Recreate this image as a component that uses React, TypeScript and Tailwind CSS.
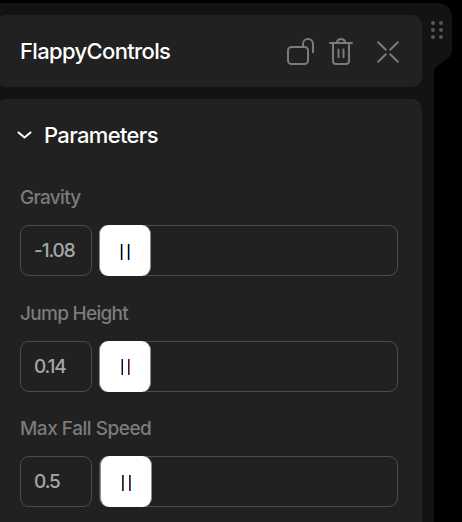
import React from "react";

const params = [
  {
    label: "Gravity", value: "-1.08", labelClass: "tracking-[-0.7px]", valueClass: "tracking-[-1.1px] pl-[13px]",
    row: "mb-[23px]", thumb: "ml-0", bars: "gap-[4px] pl-[20px] pt-[19px]",
    left: "w-[3px] border-x border-l-[#ffc68a] border-r-[#4aa8ff] bg-black",
    right: "w-[3px] border-x border-l-[#ffc68a] border-r-[#4aa8ff] bg-black",
  },
  {
    label: "Jump Height", value: "0.14", labelClass: "tracking-[-0.7px]", valueClass: "tracking-[-1.2px] pl-[13px]",
    row: "mb-[22px]", thumb: "ml-0", bars: "gap-[5px] pl-[21px] pt-[18px]",
    left: "w-[2px] border-x border-l-[#a88a58] border-r-[#000080]",
    right: "w-[2px] border-x border-l-[#800000] border-r-[#5a88a8]",
  },
  {
    label: "Max Fall Speed", value: "0.5", labelClass: "tracking-[-0.48px]", valueClass: "tracking-[-1.1px] pl-[13px]",
    row: "mb-[22px]", thumb: "ml-px", bars: "gap-[5px] pl-[21px] pt-[19px]",
    left: "w-[2px] border-x border-l-[#800000] border-r-[#1468a8]",
    right: "w-[2px] border-x border-l-[#701010] border-r-[#1468a8]",
  },
];

function UnlockIcon() {
  return (
    <svg width="28" height="28" viewBox="0 0 28 28" fill="none" stroke="#7b7b7b" strokeWidth="2" strokeLinecap="round">
      <rect x="2" y="10" width="20" height="17" rx="3.5" />
      <path d="M17 9.5V7a5 5 0 0 1 10 0V15.2" />
    </svg>
  );
}

function TrashIcon() {
  return (
    <svg width="24" height="28" viewBox="0 0 24 28" fill="none" stroke="#7b7b7b" strokeWidth="2" strokeLinecap="round">
      <path d="M1 6h22M7.8 5.5a4.3 4.3 0 0 1 8.4 0M4 6.5v17.5a3 3 0 0 0 3 3h10a3 3 0 0 0 3-3V6.5M9.5 12.5v7.8M14.5 12.5v7.8" />
    </svg>
  );
}

function CollapseIcon() {
  return (
    <svg width="22" height="22" viewBox="0 0 22 22" fill="none" stroke="#7b7b7b" strokeWidth="2" strokeLinecap="round">
      <path d="M1.2 1.2l7.6 7.6M20.8 1.2l-7.6 7.6M1.2 20.8l7.6-7.6M20.8 20.8l-7.6-7.6" />
    </svg>
  );
}

export default function App() {
  return (
    <div className="flex h-[522px] w-[462px] items-start overflow-hidden bg-black pt-[3px] font-['Inter',sans-serif]">
      <main className="flex h-[519px] w-[434px] shrink-0 flex-col gap-3 bg-[#131313] pt-3">
        <header className="-ml-1 flex h-[72px] w-[426px] shrink-0 items-center rounded-[10px] bg-[#212121] pl-6">
          <h1 className="w-[266px] text-[22px] leading-7 font-medium tracking-[-0.65px] whitespace-nowrap text-white">FlappyControls</h1>
          <div className="flex items-center">
            <UnlockIcon />
            <div className="ml-[15px]"><TrashIcon /></div>
            <div className="ml-[23.5px] pt-px"><CollapseIcon /></div>
          </div>
        </header>
        <section className="-ml-1 h-[440px] w-[426px] rounded-t-[10px] bg-[#212121] pt-[22px] pl-6">
          <div className="mb-[34px] flex h-7 items-center">
            <svg className="mr-3 -ml-[3px]" width="15" height="9" viewBox="0 0 15 9" fill="none" stroke="white" strokeWidth="2" strokeLinecap="round" strokeLinejoin="round">
              <path d="M1.5 1.5l6 5 6-5" />
            </svg>
            <h2 className="text-[22px] leading-7 font-medium tracking-[-0.65px] text-white">Parameters</h2>
          </div>
          {params.map((p) => (
            <div key={p.label} className={p.row}>
              <div className={`mb-[12px] h-[30px] text-[19px] leading-[30px] font-medium whitespace-nowrap text-[#7b7b7b] ${p.labelClass}`}>{p.label}</div>
              <div className="flex gap-[7px]">
                <div className={`flex h-[51px] w-[72px] items-center rounded-[9px] border border-[#4d4d4d] pt-[2px] text-[19px] font-medium text-[#a6a6a6] ${p.valueClass}`}>{p.value}</div>
                <div className="h-[51px] w-[299px] rounded-[9px] border border-[#4d4d4d]">
                  <div className={`-mt-px -translate-x-px ${p.thumb}`}>
                    <div className={`flex h-[51px] w-[52px] rounded-[9px] border-x border-[#8c8c8c] bg-white ${p.bars}`}>
                      <i className={`h-4 ${p.left}`} />
                      <i className={`h-4 ${p.right}`} />
                    </div>
                  </div>
                </div>
              </div>
            </div>
          ))}
        </section>
      </main>
      <aside className="relative h-[68px] w-[18px] shrink-0">
        <div className="h-full rounded-tr-[14px] bg-[#131313] [clip-path:polygon(0_0,100%_0,100%_47px,17.5px_50px,16px_53px,14px_55px,2px_64px,0_67px)]" />
        <div className="absolute top-[18px] -left-[3px] grid grid-cols-[4px_4px] gap-x-1 gap-y-[3px]">
          {[0, 1, 2, 3, 4, 5].map((n) => <i key={n} className="size-1 rounded-full bg-[#565656]" />)}
        </div>
      </aside>
    </div>
  );
}
